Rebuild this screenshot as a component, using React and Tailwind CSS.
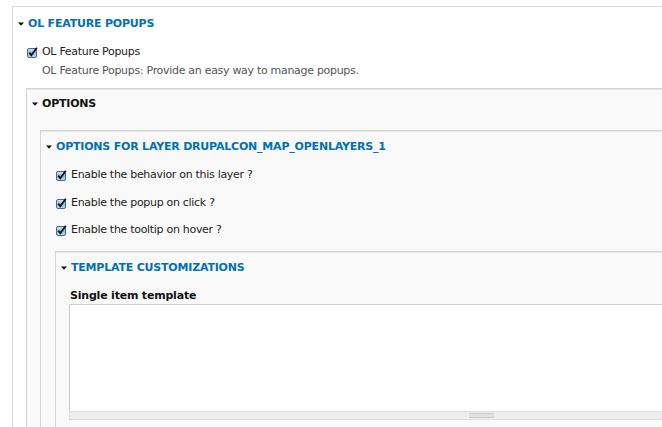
import React from 'react'

const font = { fontFamily: '"DejaVu Sans", "Liberation Sans", sans-serif' }

function Arrow() {
    return (
        <svg width="6" height="4" viewBox="0 0 6 4" className="shrink-0">
            <path d="M0 0.5 H6 L3 3.8 Z" fill="#111" />
        </svg>
    )
}

function Check() {
    return (
        <svg width="11" height="11" viewBox="0 0 11 11" className="shrink-0">
            <defs>
                <linearGradient id="cb" x1="0" y1="0" x2="0" y2="1">
                    <stop offset="0" stopColor="#d6e8f8" />
                    <stop offset="0.5" stopColor="#8fbce6" />
                    <stop offset="1" stopColor="#b9d8f3" />
                </linearGradient>
            </defs>
            <rect x="0.5" y="1.5" width="9" height="9" rx="1.5" fill="url(#cb)" stroke="#4b6a8a" />
            <path d="M2.3 5.6 L4.3 8.2 L9.8 0.8" fill="none" stroke="#111" strokeWidth="1.8" />
        </svg>
    )
}

function Legend({ children, blue = true, className = '' }) {
    return (
        <div className={`flex items-center gap-[4px] h-[16px] text-[11px] font-bold uppercase leading-[16px] tracking-[-0.2px] ${blue ? 'text-[#0071b3]' : 'text-[#111]'} ${className}`}>
            <Arrow />
            <span>{children}</span>
        </div>
    )
}

function CheckRow({ label, className = '' }) {
    return (
        <div className={`flex items-center gap-[4px] h-[14px] text-[11px] tracking-[-0.3px] text-[#222] ${className}`}>
            <Check />
            <span>{label}</span>
        </div>
    )
}

export default function App() {
    return (
        <div className="w-[662px] h-[427px] overflow-hidden bg-white" style={font}>
            <div className="w-[900px] ml-[12px] mt-[6px] border border-[#d8d8d8] bg-white">
                {/* OL Feature Popups */}
                <Legend className="mt-[9px] ml-[5px]">OL Feature Popups</Legend>
                <CheckRow label="OL Feature Popups" className="mt-[13px] ml-[14px]" />
                <p className="mt-[5px] ml-[29px] text-[11px] leading-[14px] tracking-[-0.3px] text-[#555]">
                    OL Feature Popups: Provide an easy way to manage popups.
                </p>

                {/* Options */}
                <div className="mt-[10px] ml-[13px] border border-[#d4d4d4] bg-[#f9f9f9] shadow-[inset_0_1px_0_#e6e6e6]">
                    <Legend blue={false} className="mt-[7px] ml-[5px]">Options</Legend>

                    <div className="mt-[18px] ml-[13px] border border-[#d4d4d4] bg-[#f9f9f9] shadow-[inset_0_1px_0_#e6e6e6]">
                        <Legend className="mt-[8px] ml-[5px]">Options for layer drupalcon_map_openlayers_1</Legend>
                        <CheckRow label="Enable the behavior on this layer ?" className="mt-[13px] ml-[15px]" />
                        <CheckRow label="Enable the popup on click ?" className="mt-[14px] ml-[15px]" />
                        <CheckRow label="Enable the tooltip on hover ?" className="mt-[13px] ml-[15px]" />

                        <div className="mt-[14px] ml-[14px] border border-[#d4d4d4] bg-[#f9f9f9] shadow-[inset_0_1px_0_#e6e6e6] pb-[20px]">
                            <Legend className="mt-[8px] ml-[5px]">Template customizations</Legend>
                            <div className="mt-[13px] ml-[14px] text-[11px] font-bold leading-[14px] tracking-[-0.2px] text-[#111]">
                                Single item template
                            </div>
                            <div className="mt-[1px] ml-[13px] w-[824px]">
                                <div className="h-[107px] bg-white border border-[#ccc] border-b-0" />
                                <div className="h-[9px] bg-[#eee] border border-[#ddd] flex items-center justify-center">
                                    <div className="w-[25px] h-[5px] border-y border-[#ccc] bg-[#e2e2e2]" />
                                </div>
                            </div>
                        </div>
                    </div>
                </div>
            </div>
        </div>
    )
}
